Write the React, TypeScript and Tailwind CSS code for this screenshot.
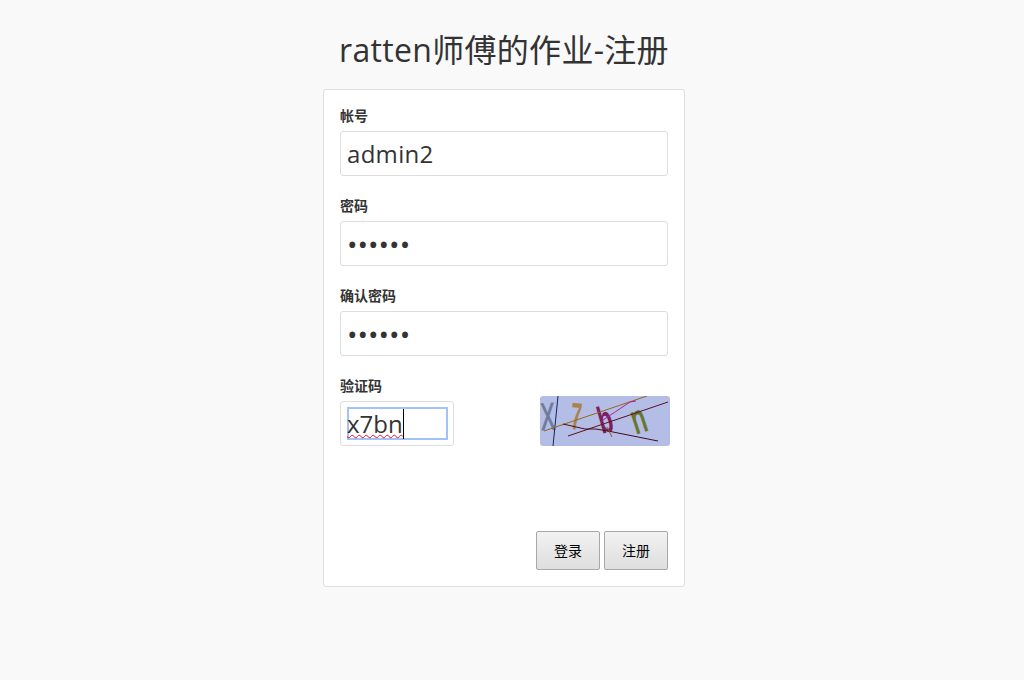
import React from 'react';

const fontStack = '[font-family:"Open_Sans","Noto_Sans_CJK_SC",sans-serif]';

function Captcha() {
  return (
    <svg width="130" height="50" viewBox="0 0 130 50" className="block rounded-[3px] bg-[#b4bde6] -mr-[2px]">
      <g fontFamily="'Liberation Sans', sans-serif">
        <text transform="translate(1.5 34) rotate(-3) scale(0.55 1)" fontSize="38" fill="#6c7c9a" stroke="#6c7c9a" strokeWidth="1.2">X</text>
        <text transform="translate(30 33) rotate(4) scale(0.52 1)" fontSize="38" fontWeight="700" fill="#a9824e">7</text>
        <text transform="translate(62 38) rotate(-16) scale(0.6 1)" fontSize="38" fontWeight="700" fill="#7c1f5e">b</text>
        <text transform="translate(96 38) rotate(-18) scale(0.62 1)" fontSize="40" fill="#66762a" stroke="#66762a" strokeWidth="1.4">n</text>
      </g>
      <path d="M18 0 L13 50" stroke="#14235a" strokeWidth="1" fill="none" />
      <path d="M4 35 L107 0" stroke="#8f6a1e" strokeWidth="1" fill="none" />
      <path d="M28 40 L128 6" stroke="#5a1020" strokeWidth="1" fill="none" />
      <path d="M23 28 L45 33 Q55 32 68 35 L118 45" stroke="#4a0a1a" strokeWidth="1" fill="none" />
      <path d="M63 24 Q75 16 90 6 L96 5" stroke="#b0209a" strokeWidth="1" fill="none" />
      <path d="M67 31 L72 41" stroke="#7a6040" strokeWidth="1" fill="none" />
    </svg>
  );
}

function Field({ label, type, value }: { label: string; type: string; value: string }) {
  return (
    <div className="mb-5">
      <label className="block h-[21px] mb-1 text-sm leading-[19px] font-bold">{label}</label>
      <input
        type={type}
        defaultValue={value}
        readOnly
        className={
          type === 'password'
            ? 'block w-full h-[45px] px-[6px] border border-[#ddd] rounded-[3px] bg-white text-[28px] text-[#333] outline-none'
            : 'block w-full h-[45px] px-[6px] border border-[#ddd] rounded-[3px] bg-white text-2xl tracking-[0.3px] text-[#333] outline-none'
        }
      />
    </div>
  );
}

export default function App() {
  return (
    <div className={`min-h-[680px] w-full bg-[#f9f9f9] text-[#333] ${fontStack}`}>
      <div className="w-[1008px] flex flex-col items-center">
        <h1 className="h-[89px] pt-[27px] text-[32px] leading-[45px] tracking-[0.3px] font-normal">ratten师傅的作业-注册</h1>
        <form className="w-[362px] h-[498px] p-4 border border-[#ddd] rounded-[3px] bg-white flex flex-col">
          <Field label="帐号" type="text" value="admin2" />
          <Field label="密码" type="password" value="123456" />
          <Field label="确认密码" type="password" value="123456" />
          <div>
            <label className="block h-[21px] mb-1 text-sm leading-[19px] font-bold">验证码</label>
            <div className="h-[45px] flex items-end justify-between">
              <div className="w-[114px] h-[45px] pl-[6px] pt-[5px] border border-[#ddd] rounded-[3px] bg-white">
                <div className="w-[101px] h-[33px] border-2 border-[#a3c1fb] text-2xl leading-[30px] flex">
                  <span className="-ml-[2px] underline decoration-wavy decoration-[#f01010] decoration-1 underline-offset-[1px]">x7bn</span>
                  <span className="w-px h-[30px] bg-black" />
                </div>
              </div>
              <Captcha />
            </div>
          </div>
          <div className="mt-auto flex justify-end gap-1">
            <button type="button" className="w-16 h-[39px] border border-[#a8a8a8] rounded-[2px] bg-gradient-to-b from-[#f2f2f2] to-[#dedede] text-sm text-black">登录</button>
            <button type="button" className="w-16 h-[39px] border border-[#a8a8a8] rounded-[2px] bg-gradient-to-b from-[#f2f2f2] to-[#dedede] text-sm text-black">注册</button>
          </div>
        </form>
      </div>
    </div>
  );
}
